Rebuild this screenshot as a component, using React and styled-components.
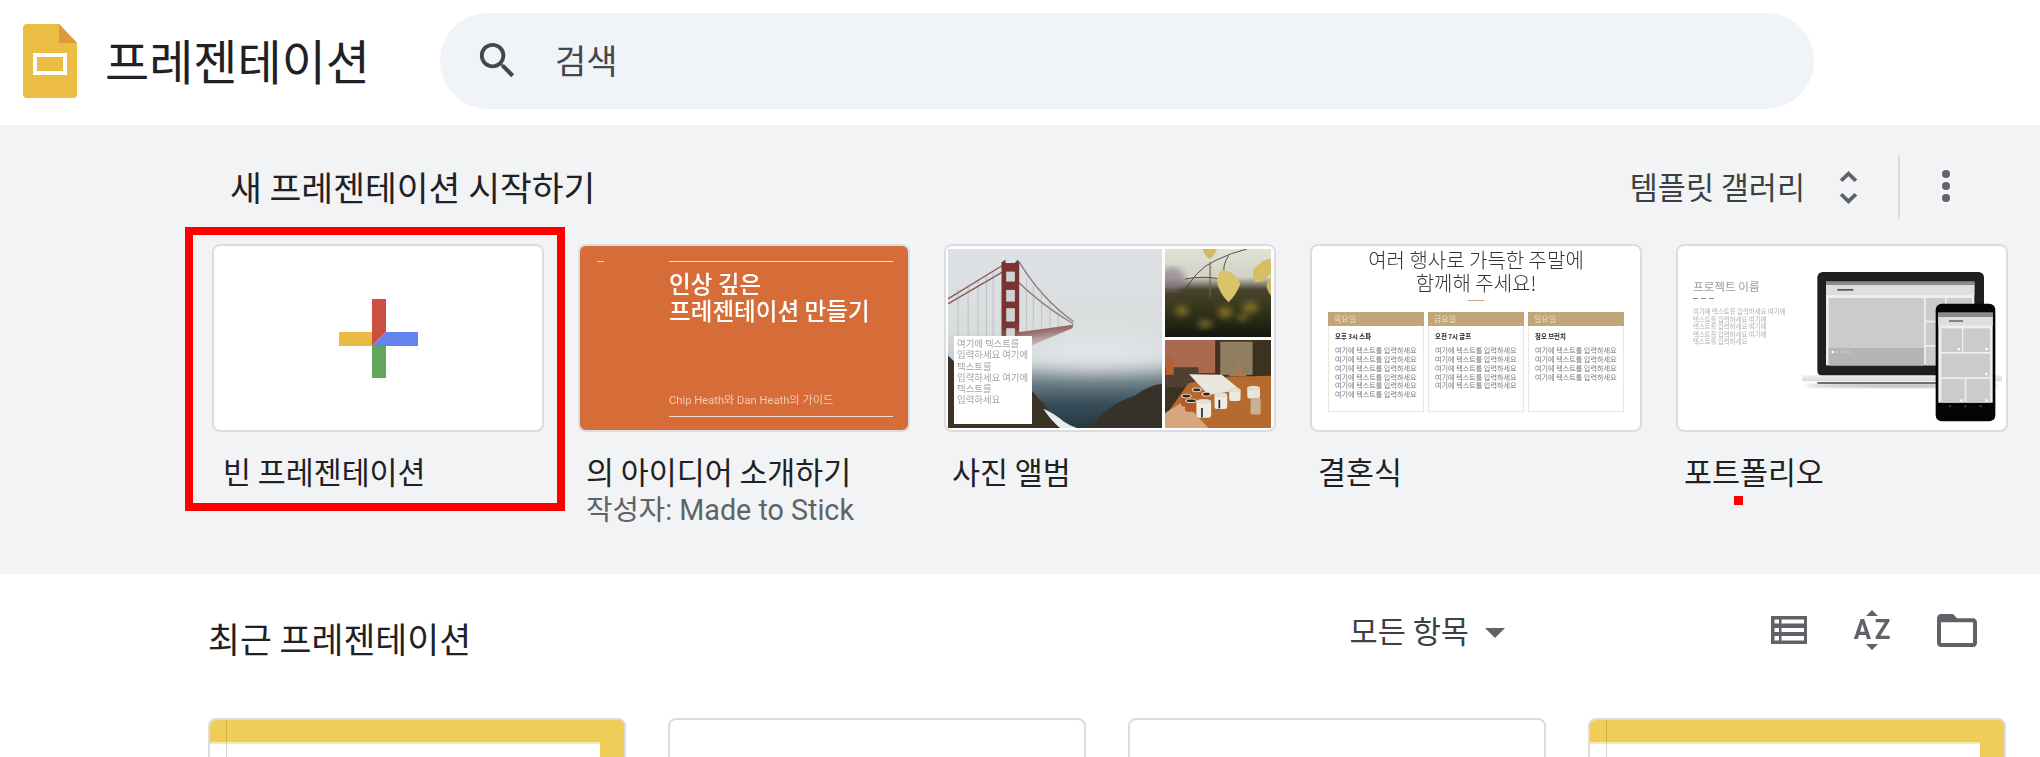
import React from "react";
import styled, { createGlobalStyle } from "styled-components";

const FONT = `Roboto, "Noto Sans CJK KR", sans-serif`;
const KO = `"Noto Sans CJK KR", sans-serif`;

const Global = createGlobalStyle`
  html, body { margin: 0; padding: 0; background: #fff; height: 757px; overflow: hidden; }
  body { font-family: ${FONT}; color: #202124; }
  * { box-sizing: border-box; }
`;

const Header = styled.header`
  display: flex; align-items: center; height: 125px; padding-bottom: 4px; background: #fff;
`;
const Brand = styled.div`
  display: flex; align-items: center; width: 440px; flex: none; padding-left: 23px;
`;
const AppTitle = styled.h1`
  margin: 0 0 2px 28px; font: 400 48px/1.2 ${KO}; color: #202124;
`;
const SearchBar = styled.div`
  display: flex; align-items: center; width: 1374px; height: 96px; border-radius: 48px;
  background: #f0f3f8; padding-left: 34px;
`;
const SearchLabel = styled.span`
  margin: 0 0 2px 34px; font: 400 34px/1 ${KO}; color: #44474a;
`;

const Sheet = styled.section`
  height: 449px; background: #f1f3f4; padding: 30px 90px 0 212px;
`;
const SheetHead = styled.div`
  display: flex; align-items: center; height: 64px;
`;
const SheetTitle = styled.h2`
  margin: 0 auto 0 18px; font: 400 34.6px/1.2 ${KO}; color: #202124;
`;
const Gallery = styled.span`
  margin-bottom: 2px; font: 400 30.5px/1.2 ${KO}; color: #3c4043;
`;
const Chevrons = styled.svg`
  width: 19px; height: 33px; margin-left: 34px; fill: #5f6368;
`;
const Divider = styled.span`
  width: 2px; height: 64px; background: #dadce0; margin: 0 42px 0 40px;
`;
const Kebab = styled.span`
  display: flex; flex-direction: column; gap: 4px; margin-bottom: 2px;
  i { display: block; width: 8px; height: 8px; border-radius: 50%; background: #5f6368; }
`;

const Templates = styled.div`
  display: grid; grid-template-columns: repeat(5, 332px); gap: 34px; margin-top: 25px;
`;
const Template = styled.div`
  position: relative;
`;
const Highlight = styled.span`
  position: absolute; left: -27px; top: -17px; width: 380px; height: 284px;
  border: 8px solid #ff0000; pointer-events: none;
`;
const Thumb = styled.div`
  height: 188px; border: 2px solid #dadce0; border-radius: 8px; overflow: hidden;
  background: ${(p) => p.$bg || "#fff"};
`;
const BlankThumb = styled(Thumb)`
  display: flex; align-items: center; justify-content: center;
`;
const Label = styled.div`
  margin-top: 20px; padding-left: ${(p) => p.$indent || 8}px;
  font: 400 30.4px/39px ${KO}; color: #202124; white-space: nowrap;
`;
const SubLabel = styled.div`
  padding-left: 8px; font: 400 28.7px/39px ${FONT}; color: #5f6368; white-space: nowrap;
`;
const Pin = styled.span`
  position: absolute; left: 58px; top: 252px; width: 9px; height: 9px; background: #ff0000;
`;

/* orange thumbnail */
const OrangeThumb = styled(Thumb)`
  display: grid; grid-template-columns: 89px 224px; background: #d66d39;
  padding-top: 15px; color: #fff; filter: blur(0.25px);
`;
const Tick = styled.span`
  display: block; width: 7px; height: 1px; margin: 0 0 0 17px; background: #f3cdb6;
`;
const OrangeBody = styled.div`
  display: flex; flex-direction: column; height: 156px; border-top: 1px solid #f6dccc; border-bottom: 1px solid #f6dccc;
`;
const OrangeTitle = styled.div`
  flex: 1; padding-top: 8px; font: 500 23.6px/27px ${KO}; color: #fff; white-space: nowrap;
`;
const OrangeFoot = styled.div`
  padding-bottom: 7px; font: 400 11.2px/16px ${FONT}; color: #f4c9ae; white-space: nowrap;
`;

/* album */
const AlbumThumb = styled(Thumb)`
  display: grid; grid-template-columns: 214px 106px; grid-template-rows: 88px 88px; gap: 3px;
  padding: 3px 0 0 2px; filter: blur(0.3px);
  svg { display: block; width: 100%; height: 100%; }
`;
const AlbumMain = styled.div`
  position: relative; grid-row: span 2;
`;
const AlbumCaption = styled.div`
  position: absolute; left: 6px; top: 87px; width: 78px; height: 88px; background: #fff;
  padding: 2px 0 0 3px; font: 400 9.4px/11.3px ${KO}; color: #a2a2a2; white-space: nowrap;
`;

/* wedding */
const WeddingThumb = styled(Thumb)`
  padding: 2px 16px 0; text-align: center;
`;
const WeddingTitle = styled.div`
  font: 300 20px/23px ${KO}; color: #333; white-space: nowrap; filter: blur(0.25px);
`;
const WeddingDash = styled.div`
  width: 16px; height: 1px; margin: 6px auto 11px; background: #c9a77c;
`;
const Columns = styled.div`
  display: flex; gap: 4px; text-align: left; filter: blur(0.3px);
`;
const Col = styled.div`
  width: 96px; height: 100px; border: 1px solid #efe6da; border-top: 0;
`;
const ColHead = styled.div`
  height: 14px; background: #c2a679; margin: 0 -1px; padding-left: 6px;
  font: 400 8px/14px ${KO}; color: #eadfc9;
`;
const ColTitle = styled.div`
  margin: 7px 0 5px 6px; font: 700 6.4px/8px ${KO}; color: #222;
`;
const ColLine = styled.div`
  margin-left: 6px; font: 400 7.1px/8.85px ${KO}; color: #777; white-space: nowrap;
`;

/* portfolio */
const PortfolioThumb = styled(Thumb)`
  display: flex; filter: blur(0.3px);
`;
const PortfolioText = styled.div`
  flex: none; width: 124px; padding: 33px 0 0 15px;
`;
const PortfolioName = styled.div`
  font: 400 11.6px/14px ${KO}; color: #9a9a9a; white-space: nowrap;
`;
const PortfolioDash = styled.div`
  width: 21px; height: 1px; margin: 5px 0 9px;
  background: repeating-linear-gradient(90deg, #888 0 5px, transparent 5px 8px);
`;
const PortfolioPara = styled.div`
  font: 400 6.4px/7.5px ${KO}; color: #b0b0b0; white-space: nowrap;
`;
const Devices = styled.svg`
  flex: none; width: 200px; height: 150px; margin-top: 26px;
`;

/* recent */
const Recent = styled.section`
  padding: 40px 63px 0 208px; background: #fff;
`;
const RecentHead = styled.div`
  display: flex; align-items: center; height: 46px;
`;
const RecentTitle = styled.h2`
  margin: 4px auto 0 0; font: 400 34.7px/1.2 ${KO}; color: #202124;
`;
const Tools = styled.div`
  display: flex; align-items: center; margin-bottom: 14px;
`;
const Owner = styled.span`
  font: 400 30.6px/1.2 ${KO}; color: #3c4043;
`;
const Caret = styled.span`
  margin: 6px 266px 0 16px; border-style: solid; border-width: 10px 10px 0; border-color: #5f6368 transparent transparent;
`;
const ListIcon = styled.svg`
  width: 36px; height: 28px; fill: #5f6368;
`;
const SortIcon = styled.span`
  display: flex; flex-direction: column; align-items: center; width: 38px; margin: 0 46px;
`;
const SortArrow = styled.i`
  display: block; border-style: solid; border-color: transparent;
  border-width: ${(p) => (p.$up ? "0 6px 6px" : "6px 6px 0")};
  ${(p) => (p.$up ? "border-bottom-color: #5f6368;" : "border-top-color: #5f6368;")}
`;
const SortText = styled.span`
  font: 700 28px/28px Roboto, sans-serif; color: #5f6368; letter-spacing: 4px; margin-right: -4px;
  transform: scaleX(.92);
`;
const FolderIcon = styled.svg`
  width: 40px; height: 33px; fill: #5f6368;
`;
const Docs = styled.div`
  display: grid; grid-template-columns: repeat(4, 418px); gap: 42px; margin-top: 58px;
`;
const Doc = styled.div`
  position: relative; height: 300px; border: 2px solid #dadce0; border-radius: 8px 8px 0 0; background: #fff;
  overflow: hidden;
`;
const DocBand = styled.div`
  height: 24px; background: #efcd58; border-bottom: 2px solid #f8eaa8;
`;
const DocEdge = styled.span`
  position: absolute; right: 0; top: 0; width: 24px; height: 100%; background: #efcd58;
`;
const DocRule = styled.span`
  position: absolute; left: 16px; top: 0; height: 100%; width: 1px; background: rgba(90,70,30,.22);
`;

const Logo = () => (
  <svg width="54" height="74" viewBox="0 0 54 74">
    <path fill="#ebbd43" d="M4 0H36L54 19V70a4 4 0 0 1-4 4H4a4 4 0 0 1-4-4V4a4 4 0 0 1 4-4Z" />
    <path fill="#dd9a3d" d="M36 0L54 19H36Z" />
    <rect x="12" y="31" width="30" height="18" fill="none" stroke="#fff" strokeWidth="4" />
  </svg>
);

const Plus = () => (
  <svg width="79" height="79" viewBox="0 0 79 79">
    <path fill="#cb5041" d="M33 0H47V33L33 47Z" />
    <path fill="#6284ec" d="M47 33H79V47H33Z" />
    <path fill="#e9bb44" d="M0 33H33V47H0Z" />
    <path fill="#62a55b" d="M33 47H47V79H33Z" />
  </svg>
);

const Bridge = () => (
  <svg viewBox="0 0 640 538" preserveAspectRatio="none">
    <defs>
      <linearGradient id="sky" x1="0" y1="0" x2="0" y2="1">
        <stop offset="0" stopColor="#dde1e5" />
        <stop offset=".45" stopColor="#d9dddd" />
        <stop offset=".62" stopColor="#c2cacc" />
        <stop offset=".74" stopColor="#6f8088" />
        <stop offset=".86" stopColor="#38505b" />
        <stop offset="1" stopColor="#26373f" />
      </linearGradient>
      <filter id="fog" x="-30%" y="-60%" width="160%" height="220%"><feGaussianBlur stdDeviation="30" /></filter>
      <filter id="soft"><feGaussianBlur stdDeviation="2.200" /></filter>
    </defs>
    <rect width="640" height="538" fill="url(#sky)" />
    <g filter="url(#soft)">
      <g stroke="#9aa3a6" strokeWidth="2" opacity=".7">
        <path d="M30 120V300M60 105V300M90 95V300M115 80V300M135 70V300M235 90V260M255 110V260M280 135V260M305 155V260M330 180V255" />
      </g>
      <g fill="none" stroke="#8a5a56" strokeWidth="4">
        <path d="M0 150L170 45M0 165L170 65" />
        <path d="M212 38Q280 150 375 218M195 85Q280 170 375 225" stroke="#8d7c7a" />
      </g>
      <path d="M160 40L172 32V42H200L208 32L213 40V270H160Z" fill="#7a3230" />
      <g fill="#ced2d3">
        <rect x="174" y="68" width="26" height="30" />
        <rect x="174" y="123" width="26" height="35" />
        <rect x="174" y="178" width="26" height="40" />
        <rect x="174" y="238" width="26" height="25" />
      </g>
      <path d="M210 250L375 228L372 238L250 290L205 280Z" fill="#7d3d3a" />
    </g>
    <ellipse cx="440" cy="305" rx="260" ry="55" fill="#e2e6e8" filter="url(#fog)" opacity=".95" />
    <ellipse cx="120" cy="310" rx="170" ry="30" fill="#d3d8da" filter="url(#fog)" opacity=".5" />
    <g filter="url(#soft)">
      <path d="M0 320L20 340L60 340L250 425L285 465L335 538H0Z" fill="#3d3026" />
      <path d="M425 538Q470 470 560 440Q600 410 640 405V538Z" fill="#34302a" />
      <path d="M285 480Q320 495 345 518Q365 532 385 538H335Q305 512 285 480Z" fill="#e8ecee" />
    </g>
  </svg>
);

const Leaves = () => (
  <svg viewBox="0 0 317 264" preserveAspectRatio="none">
    <defs>
      <linearGradient id="lv" x1="0" y1="0" x2="0" y2="1">
        <stop offset="0" stopColor="#dfe3d4" />
        <stop offset=".32" stopColor="#d2d2c6" />
        <stop offset=".46" stopColor="#4a4430" />
        <stop offset=".62" stopColor="#3a3a1f" />
        <stop offset="1" stopColor="#14170e" />
      </linearGradient>
      <filter id="bok"><feGaussianBlur stdDeviation="9" /></filter>
      <filter id="lsoft"><feGaussianBlur stdDeviation="1.500" /></filter>
    </defs>
    <rect width="317" height="264" fill="url(#lv)" />
    <ellipse cx="20" cy="90" rx="40" ry="35" fill="#8d7b8a" filter="url(#bok)" opacity=".7" />
    <g fill="#7d6a28" filter="url(#bok)">
      <ellipse cx="50" cy="185" rx="20" ry="16" />
      <ellipse cx="120" cy="225" rx="22" ry="12" />
      <ellipse cx="180" cy="190" rx="22" ry="18" />
      <ellipse cx="255" cy="175" rx="24" ry="18" />
      <ellipse cx="232" cy="205" rx="16" ry="10" />
    </g>
    <g filter="url(#lsoft)">
      <g fill="none" stroke="#3a3430" strokeWidth="2.500">
        <path d="M45 150Q90 60 150 35Q200 10 245 0" />
        <path d="M135 40V145" stroke="#6c6148" strokeWidth="6" opacity=".6" />
        <path d="M60 90Q110 80 170 90M190 20Q170 50 178 80" />
      </g>
      <path d="M170 62Q215 70 225 105Q215 135 190 160Q160 130 155 95Q158 72 170 62Z" fill="#d9c469" />
      <path d="M112 0H155Q150 20 132 30Q118 20 112 0Z" fill="#d2bb62" />
      <path d="M265 60Q300 25 317 30V70Q300 100 270 100Q258 80 265 60Z" fill="#d6bf62" />
      <path d="M317 85V140Q300 120 305 100Z" fill="#cdb75f" />
    </g>
  </svg>
);

const Mug = ({ x, y, w, h, body, rim }) => (
  <g>
    <rect x={x} y={y} width={w} height={h} rx={w / 5} fill={body} />
    <ellipse cx={x + w / 2} cy={y + 5} rx={w / 2} ry={7} fill="#ddd8cc" />
    <ellipse cx={x + w / 2} cy={y + 5} rx={w / 2 - 4} ry={4} fill={rim} />
  </g>
);

const Cafe = () => (
  <svg viewBox="0 0 317 265" preserveAspectRatio="none">
    <defs>
      <filter id="csoft"><feGaussianBlur stdDeviation="1.600" /></filter>
    </defs>
    <g filter="url(#csoft)">
      <rect width="317" height="265" fill="#3d3123" />
      <rect width="155" height="100" fill="#a96a50" />
      <rect x="165" y="5" width="100" height="100" fill="#8f7e60" />
      <rect x="150" y="0" width="12" height="100" fill="#4a2f20" />
      <rect x="262" y="0" width="55" height="110" fill="#3a3020" />
      <rect x="0" y="82" width="100" height="60" fill="#4f4032" />
      <rect x="2" y="50" width="24" height="55" fill="#b65e30" />
      <path d="M188 110Q214 92 218 55Q226 92 246 110Z" fill="#a67a52" />
      <path d="M0 230L70 130L150 112L317 108V265H0Z" fill="#b66b2f" />
      <path d="M0 265V220L55 185L130 265Z" fill="#d8a57b" />
      <path d="M72 103L170 105L225 150L130 166Z" fill="#ebe6de" />
      <Mug x={48} y={164} w={32} h={36} body="#b5592b" rim="#2f2218" />
      <Mug x={80} y={145} w={30} h={30} body="#bc6433" rim="#2f2218" />
      <Mug x={110} y={158} w={28} h={28} body="#bc6433" rim="#2f2218" />
      <Mug x={60} y={178} w={36} h={38} body="#b5592b" rim="#2f2218" />
      <Mug x={94} y={180} w={44} h={54} body="#efece4" rim="#e7e2d6" />
      <rect x="108" y="205" width="5" height="28" fill="#262626" />
      <Mug x={148} y={160} w={38} h={48} body="#efece4" rim="#e7e2d6" />
      <rect x="160" y="180" width="5" height="26" fill="#262626" />
      <Mug x={192} y={146} w={34} h={38} body="#ece9e0" rim="#e4dfd2" />
      <Mug x={246} y={140} w={38} h={36} body="#e9e6dc" rim="#e4dfd2" />
      <rect x="256" y="174" width="30" height="50" rx="5" fill="#c8bda8" opacity=".85" />
    </g>
  </svg>
);

const DeviceArt = () => (
  <Devices viewBox="397 95 600 450">
    <defs>
      <linearGradient id="base" x1="0" y1="0" x2="0" y2="1">
        <stop offset="0" stopColor="#efefef" />
        <stop offset="1" stopColor="#d8d8d8" />
      </linearGradient>
      <filter id="sh"><feGaussianBlur stdDeviation="5" /></filter>
    </defs>
    <ellipse cx="697" cy="436" rx="290" ry="6" fill="#bbb" filter="url(#sh)" />
    <rect x="443" y="95" width="500" height="312" rx="16" fill="#1f1f1f" />
    <rect x="469" y="124" width="445" height="251" fill="#eee" />
    <rect x="469" y="124" width="445" height="10" fill="#8a8a8a" />
    <rect x="469" y="134" width="445" height="30" fill="#dedede" />
    <rect x="503" y="146" width="48" height="5" fill="#555" />
    <rect x="477" y="173" width="286" height="202" fill="#cbcbcb" />
    <rect x="477" y="323" width="286" height="52" fill="#b5b5b5" />
    <circle cx="489" cy="335" r="4" fill="#fff" />
    <g fill="#ccc"><circle cx="502" cy="335" r="3.500" /><circle cx="515" cy="335" r="3.500" /><circle cx="528" cy="335" r="3.500" /><circle cx="541" cy="335" r="3.500" /></g>
    <rect x="768" y="173" width="58" height="68" fill="#cbcbcb" />
    <rect x="768" y="246" width="58" height="68" fill="#cbcbcb" />
    <rect x="768" y="319" width="58" height="56" fill="#cbcbcb" />
    <rect x="831" y="173" width="76" height="202" fill="#cbcbcb" />
    <rect x="397" y="405" width="600" height="18" rx="8" fill="url(#base)" />
    <rect x="443" y="425" width="500" height="6" fill="#6d6d6d" />
    <rect x="798" y="190" width="179" height="353" rx="18" fill="#050505" />
    <rect x="806" y="217" width="163" height="270" fill="#eee" />
    <rect x="806" y="217" width="163" height="13" fill="#8a8a8a" />
    <rect x="806" y="230" width="163" height="26" fill="#dedede" />
    <rect x="838" y="240" width="42" height="4" fill="#555" />
    <g fill="#cbcbcb">
      <rect x="815" y="264" width="62" height="71" />
      <rect x="881" y="264" width="80" height="71" />
      <rect x="815" y="340" width="146" height="71" />
      <rect x="815" y="416" width="70" height="71" />
      <rect x="890" y="416" width="71" height="71" />
    </g>
    <g fill="#fff">
      <rect x="864" y="323" width="7" height="7" />
      <rect x="947" y="323" width="7" height="7" />
      <rect x="947" y="398" width="7" height="7" />
      <rect x="872" y="477" width="7" height="7" />
      <rect x="947" y="477" width="7" height="7" />
    </g>
    <g fill="#555">
      <circle cx="841" cy="498" r="3" />
      <circle cx="887" cy="498" r="3" />
      <circle cx="933" cy="498" r="3" />
    </g>
  </Devices>
);

const schedule = [
  { day: "목요일", title: "오후 3시 스파", lines: 6 },
  { day: "금요일", title: "오전 7시 골프", lines: 5 },
  { day: "일요일", title: "정오 브런치", lines: 4 },
];

export default function App() {
  return (
    <>
      <Global />
      <Header>
        <Brand>
          <Logo />
          <AppTitle>프레젠테이션</AppTitle>
        </Brand>
        <SearchBar>
          <svg width="47" height="47" viewBox="0 0 24 24" fill="#44474a">
            <path d="M15.5 14h-.79l-.28-.27A6.471 6.471 0 0 0 16 9.5 6.5 6.5 0 1 0 9.5 16c1.61 0 3.09-.59 4.23-1.57l.27.28v.79l5 4.99L20.49 19l-4.99-5zm-6 0C7.01 14 5 11.99 5 9.5S7.01 5 9.5 5 14 7.01 14 9.5 11.99 14 9.5 14z" />
          </svg>
          <SearchLabel>검색</SearchLabel>
        </SearchBar>
      </Header>

      <Sheet>
        <SheetHead>
          <SheetTitle>새 프레젠테이션 시작하기</SheetTitle>
          <Gallery>템플릿 갤러리</Gallery>
          <Chevrons viewBox="7 3 10 18" preserveAspectRatio="none">
            <path d="M12 5.83L15.17 9l1.41-1.41L12 3 7.41 7.59 8.83 9 12 5.83zm0 12.34L8.83 15l-1.41 1.41L12 21l4.59-4.59L15.17 15 12 18.17z" />
          </Chevrons>
          <Divider />
          <Kebab><i /><i /><i /></Kebab>
        </SheetHead>

        <Templates>
          <Template>
            <BlankThumb><Plus /></BlankThumb>
            <Label $indent={11}>빈 프레젠테이션</Label>
            <Highlight />
          </Template>

          <Template>
            <OrangeThumb>
              <Tick />
              <OrangeBody>
                <OrangeTitle>인상 깊은<br />프레젠테이션 만들기</OrangeTitle>
                <OrangeFoot>Chip Heath와 Dan Heath의 가이드</OrangeFoot>
              </OrangeBody>
            </OrangeThumb>
            <Label>의 아이디어 소개하기</Label>
            <SubLabel>작성자: Made to Stick</SubLabel>
          </Template>

          <Template>
            <AlbumThumb>
              <AlbumMain>
                <Bridge />
                <AlbumCaption>여기에 텍스트를<br />입력하세요 여기에<br />텍스트를<br />입력하세요 여기에<br />텍스트를<br />입력하세요</AlbumCaption>
              </AlbumMain>
              <Leaves />
              <Cafe />
            </AlbumThumb>
            <Label>사진 앨범</Label>
          </Template>

          <Template>
            <WeddingThumb>
              <WeddingTitle>여러 행사로 가득한 주말에<br />함께해 주세요!</WeddingTitle>
              <WeddingDash />
              <Columns>
                {schedule.map((c) => (
                  <Col key={c.day}>
                    <ColHead>{c.day}</ColHead>
                    <ColTitle>{c.title}</ColTitle>
                    {Array.from({ length: c.lines }, (_, i) => (
                      <ColLine key={i}>여기에 텍스트를 입력하세요</ColLine>
                    ))}
                  </Col>
                ))}
              </Columns>
            </WeddingThumb>
            <Label>결혼식</Label>
          </Template>

          <Template>
            <PortfolioThumb>
              <PortfolioText>
                <PortfolioName>프로젝트 이름</PortfolioName>
                <PortfolioDash />
                <PortfolioPara>여기에 텍스트를 입력하세요 여기에<br />텍스트를 입력하세요 여기에<br />텍스트를 입력하세요 여기에<br />텍스트를 입력하세요 여기에<br />텍스트를 입력하세요</PortfolioPara>
              </PortfolioText>
              <DeviceArt />
            </PortfolioThumb>
            <Label>포트폴리오</Label>
            <Pin />
          </Template>
        </Templates>
      </Sheet>

      <Recent>
        <RecentHead>
          <RecentTitle>최근 프레젠테이션</RecentTitle>
          <Tools>
            <Owner>모든 항목</Owner>
            <Caret />
            <ListIcon viewBox="0 0 36 28">
              <path fillRule="evenodd" d="M0 0H36V28H0ZM3.500 3.500V7.500H8V3.500ZM10.500 3.500V7.500H33V3.500ZM3.500 12V16H8V12ZM10.500 12V16H33V12ZM3.500 20V24.500H8V20ZM10.500 20V24.500H33V20Z" />
            </ListIcon>
            <SortIcon>
              <SortArrow $up />
              <SortText>AZ</SortText>
              <SortArrow />
            </SortIcon>
            <FolderIcon viewBox="2 4 20 16" preserveAspectRatio="none">
              <path d="M20 6h-8l-2-2H4c-1.100 0-1.990.9-1.990 2L2 18c0 1.100.9 2 2 2h16c1.100 0 2-.9 2-2V8c0-1.100-.9-2-2-2zm0 12H4V8h16v10z" />
            </FolderIcon>
          </Tools>
        </RecentHead>
        <Docs>
          <Doc><DocBand /><DocEdge /><DocRule /></Doc>
          <Doc />
          <Doc />
          <Doc><DocBand /><DocEdge /><DocRule /></Doc>
        </Docs>
      </Recent>
    </>
  );
}
